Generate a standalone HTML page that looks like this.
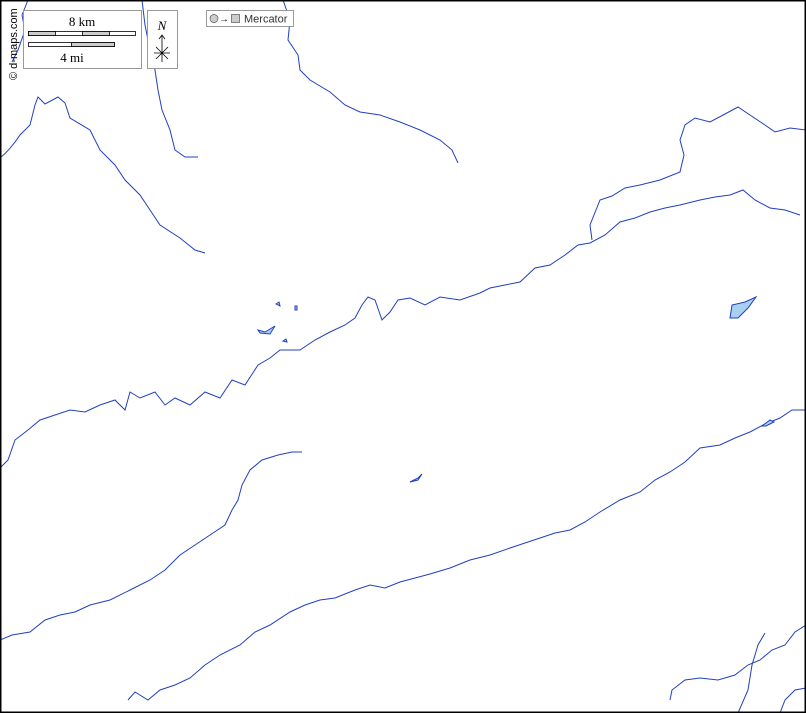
<!DOCTYPE html>
<html><head><meta charset="utf-8"><style>
html,body{margin:0;padding:0;background:#fff}
svg{display:block}
</style></head><body>
<svg width="806" height="713" viewBox="0 0 806 713" xmlns="http://www.w3.org/2000/svg">
<rect x="0" y="0" width="806" height="713" fill="#fff"/>
<g fill="none" stroke="#2040c0" stroke-width="1">
<path d="M0,158 Q10,150 20,135 L30,125 L35,105 L38,97 L45,104 L58,97 L65,103 L70,118 L90,130 L100,150 L115,165 L125,180 L140,195 L150,210 L160,225 L180,238 L195,250 L205,253"/>
<path d="M28,0 L22,15 L25,30 L18,50 L12,62"/>
<path d="M142,0 L145,25 L150,50 L155,70 L158,90 L162,110 L170,130 L175,150 L185,157 L198,157"/>
<path d="M283,0 L290,20 L288,40 L298,55 L300,70 L310,80 L330,92 L345,105 L360,112 L380,115 L400,122 L420,130 L440,140 L452,150 L458,163"/>
<path d="M0,468 L8,460 L15,440 L28,430 L40,420 L55,415 L70,410 L85,412 L100,405 L115,400 L125,410 L130,392 L140,398 L155,392 L165,405 L175,398 L190,405 L205,392 L220,398 L232,380 L245,385 L258,365 L270,358 L280,350 L300,350 L315,340 L330,332 L345,325 L355,318 L362,305 L368,297 L375,300 L382,320 L390,312 L398,300 L410,298 L425,305 L440,297 L460,300 L480,293 L490,288 L505,285 L520,282 L535,268 L550,265 L565,255 L578,245 L590,243 L605,235 L620,222 L635,218 L650,212 L665,208 L680,205 L700,200 L715,197 L730,195 L743,190 L755,200 L770,208 L785,210 L800,215"/>
<path d="M592,240 L590,225 L596,210 L600,200 L612,196 L625,188 L640,185 L660,180 L680,172 L684,155 L680,140 L685,125 L695,118 L710,122 L725,114 L738,107 L750,115 L765,125 L775,132 L790,128 L806,130"/>
<path d="M0,640 L12,635 L30,632 L45,620 L60,615 L75,612 L90,605 L110,600 L130,590 L150,580 L165,570 L180,555 L195,545 L210,535 L225,525 L232,510 L238,500 L242,485 L250,470 L262,460 L278,455 L292,452 L302,452"/>
<path d="M128,700 L135,692 L148,700 L160,690 L175,685 L190,678 L205,665 L220,655 L240,645 L255,632 L270,625 L290,612 L305,605 L320,600 L335,598 L355,590 L370,585 L385,588 L400,582 L415,578 L430,574 L450,568 L470,560 L490,555 L510,548 L525,543 L540,538 L555,533 L570,530 L585,522 L600,512 L620,500 L640,492 L655,480 L670,472 L685,462 L700,448 L720,445 L735,438 L750,432 L765,424 L780,418 L792,410 L806,410"/>
<path d="M670,700 L672,690 L685,680 L700,678 L718,680 L735,675 L748,665 L760,660 L772,650 L785,645 L795,632 L806,625"/>
<path d="M738,713 L748,690 L752,665 L758,645 L765,633"/>
<path d="M780,713 L785,700 L795,690 L806,688"/>
</g>
<g fill="#a8d0f0" stroke="#2040c0" stroke-width="1">
<path d="M730,318 L732,305 L745,302 L756,297 L748,308 L738,318 Z"/>
<path d="M258,330 L265,332 L275,326 L270,334 L260,333 Z"/>
<path d="M410,482 L418,478 L422,474 L418,480 Z"/>
<path d="M762,426 L770,420 L774,422 L766,426 Z"/>
<path d="M276,304 L279,302 L280,306 Z"/>
<path d="M295,306 L297,306 L297,310 L295,310 Z"/>
<path d="M283,341 L286,339 L287,342 Z"/>
</g>
<rect x="0.75" y="0.75" width="804.5" height="711.5" fill="none" stroke="#000" stroke-width="1.5"/>
<g font-family="Liberation Serif, serif" fill="#000">
<rect x="23.5" y="10.5" width="118" height="58" fill="#fff" stroke="#999"/>
<text x="82" y="26" font-size="13" text-anchor="middle">8 km</text>
<rect x="28.5" y="31.5" width="107" height="4" fill="#fff" stroke="#000" stroke-width="0.8"/>
<rect x="28.5" y="31.5" width="27" height="4" fill="#ccc" stroke="#000" stroke-width="0.8"/>
<rect x="82.5" y="31.5" width="27" height="4" fill="#ccc" stroke="#000" stroke-width="0.8"/>
<rect x="28.5" y="42.5" width="86" height="4" fill="#fff" stroke="#000" stroke-width="0.8"/>
<rect x="71.5" y="42.5" width="43" height="4" fill="#ccc" stroke="#000" stroke-width="0.8"/>
<text x="72" y="62" font-size="13" text-anchor="middle">4 mi</text>
<rect x="147.5" y="10.5" width="30" height="58" fill="#fff" stroke="#999"/>
<text x="162" y="30" font-size="13" font-style="italic" text-anchor="middle">N</text>
<path d="M162,35 L162,62 M154,53 L170,53 M156,47 L168,59 M168,47 L156,59 M159,39 L162,35 L165,39" stroke="#000" stroke-width="0.8" fill="none"/>
</g>
<g font-family="Liberation Sans, sans-serif">
<rect x="206.5" y="10.5" width="87" height="16" fill="#fff" stroke="#999"/>
<circle cx="214" cy="18.5" r="4" fill="#ccc" stroke="#555" stroke-width="0.7"/>
<text x="219" y="22" font-size="10" fill="#000">→</text>
<rect x="231.5" y="14.5" width="8" height="8" fill="#ccc" stroke="#555" stroke-width="0.7"/>
<text x="244" y="22.5" font-size="11" fill="#333">Mercator</text>
<text transform="translate(17,80) rotate(-90)" font-size="11" fill="#000">© d-maps.com</text>
</g>
</svg>
</body></html>
